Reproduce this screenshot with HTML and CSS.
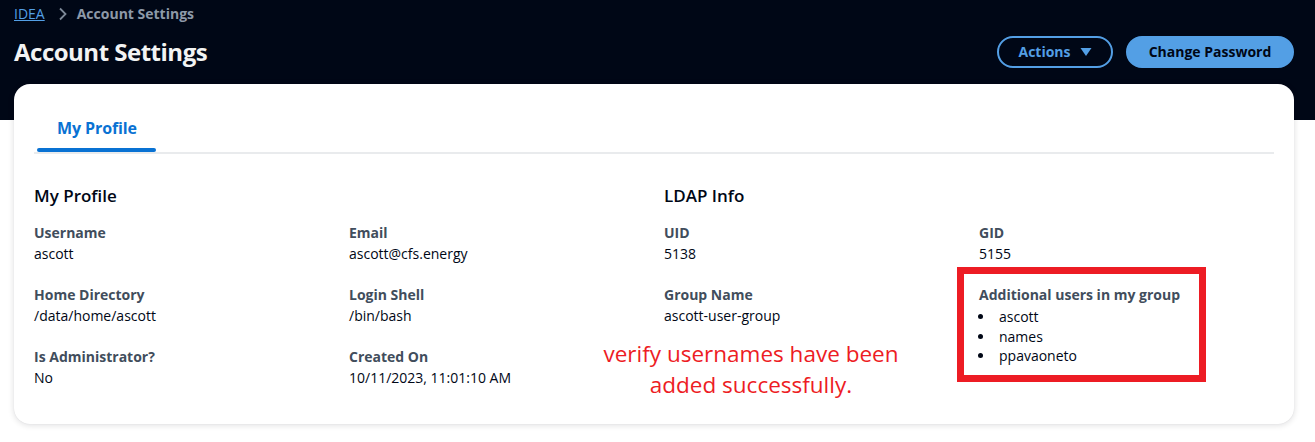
FILE: index.html
```html
<!DOCTYPE html>
<html>
<head>
<meta charset="utf-8">
<link rel="stylesheet" href="styles.css">
</head>
<body>
<header class="header">
  <nav class="crumbs">
    <a class="crumb-link" href="#">IDEA</a>
    <svg class="crumb-sep" width="10" height="14" viewBox="0 0 10 14"><path d="M2 1.5 L7.5 7 L2 12.5" fill="none" stroke="#7d8998" stroke-width="1.8"/></svg>
    <span class="crumb-current">Account Settings</span>
  </nav>
  <div class="title-row">
    <h1 class="title">Account Settings</h1>
    <div class="actions">
      <button class="btn btn-outline">Actions <svg class="caret" width="12" height="10" viewBox="0 0 12 10"><path d="M0.5 1 L11.5 1 L6 9 Z" fill="#539fe5"/></svg></button>
      <button class="btn btn-primary">Change Password</button>
    </div>
  </div>
</header>

<main class="card">
  <div class="tabs">
    <div class="tab active">My Profile</div>
  </div>
  <div class="sections">
    <section class="section">
      <h2 class="section-title">My Profile</h2>
      <div class="grid">
        <div class="field"><div class="label">Username</div><div class="value">ascott</div></div>
        <div class="field"><div class="label">Email</div><div class="value">ascott@cfs.energy</div></div>
        <div class="field"><div class="label">Home Directory</div><div class="value">/data/home/ascott</div></div>
        <div class="field"><div class="label">Login Shell</div><div class="value">/bin/bash</div></div>
        <div class="field"><div class="label">Is Administrator?</div><div class="value">No</div></div>
        <div class="field"><div class="label">Created On</div><div class="value">10/11/2023, 11:01:10 AM</div></div>
      </div>
    </section>
    <section class="section">
      <h2 class="section-title">LDAP Info</h2>
      <div class="grid">
        <div class="field"><div class="label">UID</div><div class="value">5138</div></div>
        <div class="field"><div class="label">GID</div><div class="value">5155</div></div>
        <div class="field"><div class="label">Group Name</div><div class="value">ascott-user-group</div></div>
        <div class="field"><div class="label">Additional users in my group</div>
          <ul class="users">
            <li>ascott</li>
            <li>names</li>
            <li>ppavaoneto</li>
          </ul>
        </div>
      </div>
    </section>
  </div>
  <div class="note">verify usernames have been<br>added successfully.</div>
  <div class="highlight"></div>
</main>
</body>
</html>
```

FILE: styles.css
```css
* { box-sizing: border-box; }
body {
  margin: 0;
  padding-bottom: 18px;
  background: #ffffff;
  font-family: "Open Sans", "Noto Sans", sans-serif;
  color: #000716;
}
.header {
  background: #000716;
  padding: 4px 21px 52px 14px;
}
.crumbs {
  display: flex;
  align-items: center;
  height: 20px;
  font-size: 14px;
  line-height: 20px;
}
.crumb-link {
  color: #539fe5;
  text-decoration: underline;
}
.crumb-sep { margin: 0 9px 0 13px; }
.crumb-current {
  color: #8d99a8;
  font-weight: 700;
}
.title-row {
  margin-top: 12px;
  height: 32px;
  display: flex;
  align-items: center;
  justify-content: space-between;
}
.title {
  margin: 0;
  color: #f2f3f3;
  font-size: 24px;
  font-weight: 700;
  line-height: 30px;
  letter-spacing: -0.5px;
}
.actions {
  display: flex;
  gap: 13px;
}
.btn {
  font-family: inherit;
  font-size: 14px;
  font-weight: 700;
  height: 32px;
  border-radius: 20px;
  border: 2px solid #539fe5;
  padding: 0 18px;
  line-height: 28px;
  cursor: pointer;
}
.btn-outline {
  width: 116px;
  background: transparent;
  color: #539fe5;
  display: flex;
  align-items: center;
  justify-content: center;
}
.caret { margin-left: 9px; }
.btn-primary {
  width: 168px;
  background: #539fe5;
  color: #000716;
}
.card {
  position: relative;
  margin: -36px 21px 0 14px;
  height: 340px;
  background: #ffffff;
  border-radius: 16px;
  box-shadow: 0 1px 6px rgba(0, 7, 22, 0.14), 0 0 1px rgba(0, 7, 22, 0.1);
  padding: 20px 20px 0 20px;
}
.tabs {
  display: flex;
  border-bottom: 2px solid #e9ebed;
}
.tab {
  position: relative;
  margin-left: 3px;
  height: 48px;
  padding: 14px 19px 14px 20px;
  font-size: 16px;
  font-weight: 700;
  line-height: 20px;
  color: #0972d3;
  letter-spacing: -0.1px;
}
.tab.active::after {
  content: "";
  position: absolute;
  left: 0;
  right: 0;
  bottom: 0;
  height: 4px;
  border-radius: 4px;
  background: #0972d3;
}
.sections {
  display: grid;
  grid-template-columns: 630px 630px;
  padding-top: 30px;
}
.section-title {
  margin: 0 0 15px 0;
  font-size: 17px;
  font-weight: 600;
  line-height: 24px;
  color: #000716;
}
.grid {
  display: grid;
  grid-template-columns: 315px 315px;
  row-gap: 21px;
}
.label {
  font-size: 14px;
  font-weight: 700;
  line-height: 20px;
  color: #414d5c;
}
.value {
  margin-top: 1px;
  font-size: 14px;
  line-height: 20px;
  color: #000716;
}
.users {
  margin: 2px 0 0 0;
  padding-left: 16px;
  font-size: 14px;
  line-height: 19.5px;
}
.users li { padding-left: 4px; }
.note {
  position: absolute;
  left: 537px;
  top: 254px;
  width: 400px;
  text-align: center;
  color: #ed1c24;
  font-size: 22.5px;
  line-height: 31px;
}
.highlight {
  position: absolute;
  left: 943px;
  top: 183px;
  width: 249px;
  height: 115px;
  border: 7px solid #ed1c24;
}
```
